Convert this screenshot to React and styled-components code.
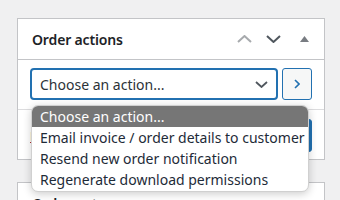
import styled, { createGlobalStyle } from "styled-components";

const GlobalStyle = createGlobalStyle`
  html, body {
    margin: 0;
    padding: 0;
    background: #f0f0f1;
  }
  body {
    font-family: "Noto Sans", "Open Sans", sans-serif;
    color: #1d2327;
  }
`;

const Page = styled.div`
  box-sizing: border-box;
  padding: 18px 15px 0 17px;
  width: 340px;
  height: 200px;
  overflow: hidden;
`;

const Postbox = styled.div`
  position: relative;
  background: #fff;
  border: 1px solid #c3c4c7;
  margin-bottom: ${(p) => p.gap || 0}px;
`;

const Header = styled.div`
  height: 40px;
  display: flex;
  align-items: center;
  padding: 0 10px 0 14px;
  border-bottom: 1px solid #c3c4c7;
`;

const Title = styled.h2`
  flex: 1;
  margin: 0;
  font-size: 14px;
  font-weight: 600;
  letter-spacing: -0.15px;
  color: #1d2327;
`;

const Handles = styled.div`
  display: flex;
  align-items: center;
  gap: 13px;
`;

const HandleButton = styled.span`
  display: flex;
  align-items: center;
  justify-content: center;
  width: ${(p) => p.w || 16}px;
  height: 16px;
`;

const List = styled.ul`
  list-style: none;
  margin: 0;
  padding: 0;
`;

const Item = styled.li`
  display: flex;
  align-items: center;
  padding: ${(p) => p.pad};
  border-top: ${(p) => (p.divided ? "1px solid #dcdcde" : "none")};
  justify-content: ${(p) => p.justify || "flex-start"};
`;

const Select = styled.div`
  box-sizing: border-box;
  width: 248px;
  height: 32px;
  border: 2px solid #2271b1;
  border-radius: 4px;
  display: flex;
  align-items: center;
  justify-content: space-between;
  padding: 0 8px 0 8px;
  font-size: 14px;
  color: #2c3338;
`;

const GoButton = styled.button`
  box-sizing: border-box;
  margin-left: 4px;
  width: 30px;
  height: 32px;
  border: 1px solid #2271b1;
  border-radius: 3px;
  background: #f6f7f7;
  display: flex;
  align-items: center;
  justify-content: center;
  padding: 0;
`;

const TrashLink = styled.span`
  font-size: 13px;
  color: #b32d2e;
  text-decoration: underline;
`;

const SaveButton = styled.button`
  box-sizing: border-box;
  height: 33px;
  padding: 0 12px;
  border: 1px solid #2271b1;
  border-radius: 3px;
  background: #2271b1;
  color: #fff;
  font-family: inherit;
  font-size: 13px;
`;

const Menu = styled.ul`
  position: absolute;
  left: 13px;
  top: 86px;
  width: 278px;
  margin: 0;
  padding: 0 0 1px;
  list-style: none;
  background: #fff;
  border: 1px solid #d0d0d0;
  border-radius: 7px;
  box-sizing: border-box;
  box-shadow: 0 2px 9px rgba(0, 0, 0, 0.2);
  overflow: hidden;
  z-index: 2;
`;

const Option = styled.li`
  height: 21px;
  line-height: 21px;
  padding-left: 8px;
  font-size: 14px;
  white-space: nowrap;
  color: ${(p) => (p.active ? "#fff" : "#1e2b38")};
  background: ${(p) => (p.active ? "#767676" : "transparent")};
`;

const Chevron = ({ up, color, w = 15, h = 8, stroke = 2 }) => (
  <svg width={w} height={h} viewBox={`0 0 ${w} ${h}`}>
    <polyline
      points={
        up
          ? `1,${h - 1} ${w / 2},1 ${w - 1},${h - 1}`
          : `1,1 ${w / 2},${h - 1} ${w - 1},1`
      }
      fill="none"
      stroke={color}
      strokeWidth={stroke}
    />
  </svg>
);

const options = [
  "Choose an action...",
  "Email invoice / order details to customer",
  "Resend new order notification",
  "Regenerate download permissions",
];

export default function App() {
  return (
    <>
      <GlobalStyle />
      <Page>
        <Postbox gap={22}>
          <Header>
            <Title>Order actions</Title>
            <Handles>
              <HandleButton w={16}>
                <Chevron up color="#a7aaad" />
              </HandleButton>
              <HandleButton w={16}>
                <Chevron color="#50575e" />
              </HandleButton>
              <HandleButton w={20}>
                <svg width="9" height="6" viewBox="0 0 9 6">
                  <polygon points="0,6 4.5,0 9,6" fill="#787c82" />
                </svg>
              </HandleButton>
            </Handles>
          </Header>
          <List>
            <Item pad="8px 12px 9px">
              <Select>
                <span>Choose an action...</span>
                <Chevron color="#50575e" w={13} h={7} stroke={1.8} />
              </Select>
              <GoButton aria-label="Apply">
                <svg width="6" height="10" viewBox="0 0 6 10">
                  <polyline
                    points="1,1 5,5 1,9"
                    fill="none"
                    stroke="#2271b1"
                    strokeWidth="1.6"
                  />
                </svg>
              </GoButton>
            </Item>
            <Item divided pad="9px 12px 7px" justify="space-between">
              <TrashLink>Move to Trash</TrashLink>
              <SaveButton>Update</SaveButton>
            </Item>
          </List>
          <Menu>
            {options.map((o, i) => (
              <Option key={o} active={i === 0}>
                {o}
              </Option>
            ))}
          </Menu>
        </Postbox>
        <Postbox>
          <Header>
            <Title>Order notes</Title>
          </Header>
        </Postbox>
      </Page>
    </>
  );
}
